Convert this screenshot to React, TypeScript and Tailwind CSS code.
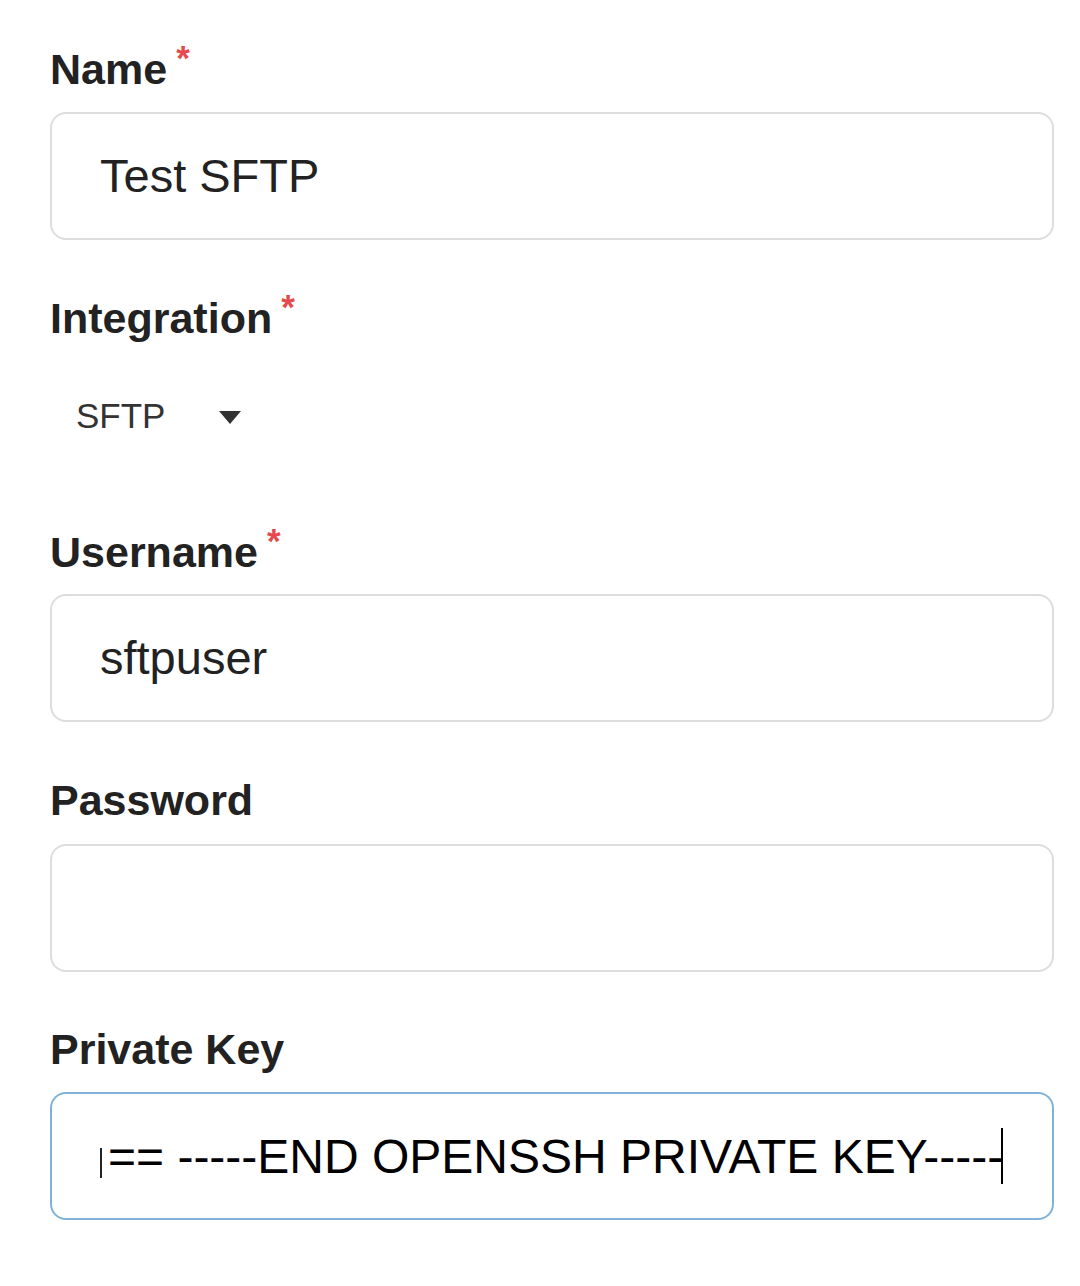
import React from "react";

const font = { fontFamily: '"Liberation Sans", Arial, Helvetica, sans-serif' };

function Label({ text, required }: { text: string; required?: boolean }) {
  return (
    <div className="h-[56px] leading-[56px] text-[43px] font-bold text-[#222] flex items-start">
      <span>{text}</span>
      {required && (
        <span className="text-[#e5484d] text-[35px] leading-[34px] ml-[9px] mt-[0px] font-bold">*</span>
      )}
    </div>
  );
}

function TextBox({ value, focused }: { value?: string; focused?: boolean }) {
  return (
    <div
      className={`h-[128px] w-[1004px] rounded-[16px] border-2 ${
        focused ? "border-[#7fb3d8]" : "border-[#dddddd]"
      } bg-white flex items-center pl-[48px] text-[47px] text-[#222]`}
    >
      {value}
    </div>
  );
}

export default function App() {
  return (
    <div className="min-h-[1286px] w-[1080px] bg-white pl-[50px] pt-[41px]" style={font}>
      <Label text="Name" required />
      <div className="mt-[15px]">
        <TextBox value="Test SFTP" />
      </div>

      <div className="mt-[50px]">
        <Label text="Integration" required />
      </div>
      <div className="mt-[50px] h-[40px] flex items-center pl-[26px]">
        <span className="text-[35px] leading-[40px] text-[#333]">SFTP</span>
        <svg className="ml-[54px] mt-[4px]" width="22" height="14" viewBox="0 0 22 14">
          <polygon points="0,0 22,0 11,13" fill="#333" />
        </svg>
      </div>

      <div className="mt-[88px]">
        <Label text="Username" required />
      </div>
      <div className="mt-[14px]">
        <TextBox value="sftpuser" />
      </div>

      <div className="mt-[50px]">
        <Label text="Password" />
      </div>
      <div className="mt-[16px]">
        <TextBox />
      </div>

      <div className="mt-[49px]">
        <Label text="Private Key" />
      </div>
      <div className="mt-[15px] h-[128px] w-[1004px] rounded-[16px] border-2 border-[#7fb3d8] bg-white flex items-center pl-[48px] overflow-hidden">
        <span className="w-[2px] h-[30px] bg-[#222] mt-[14px]" />
        <span className="ml-[6px] mt-[2px] text-[48px] text-black whitespace-nowrap">
          == -----END OPENSSH PRIVATE KEY-----
        </span>
        <span className="w-[2px] h-[56px] bg-black -ml-[2px]" />
      </div>
    </div>
  );
}
